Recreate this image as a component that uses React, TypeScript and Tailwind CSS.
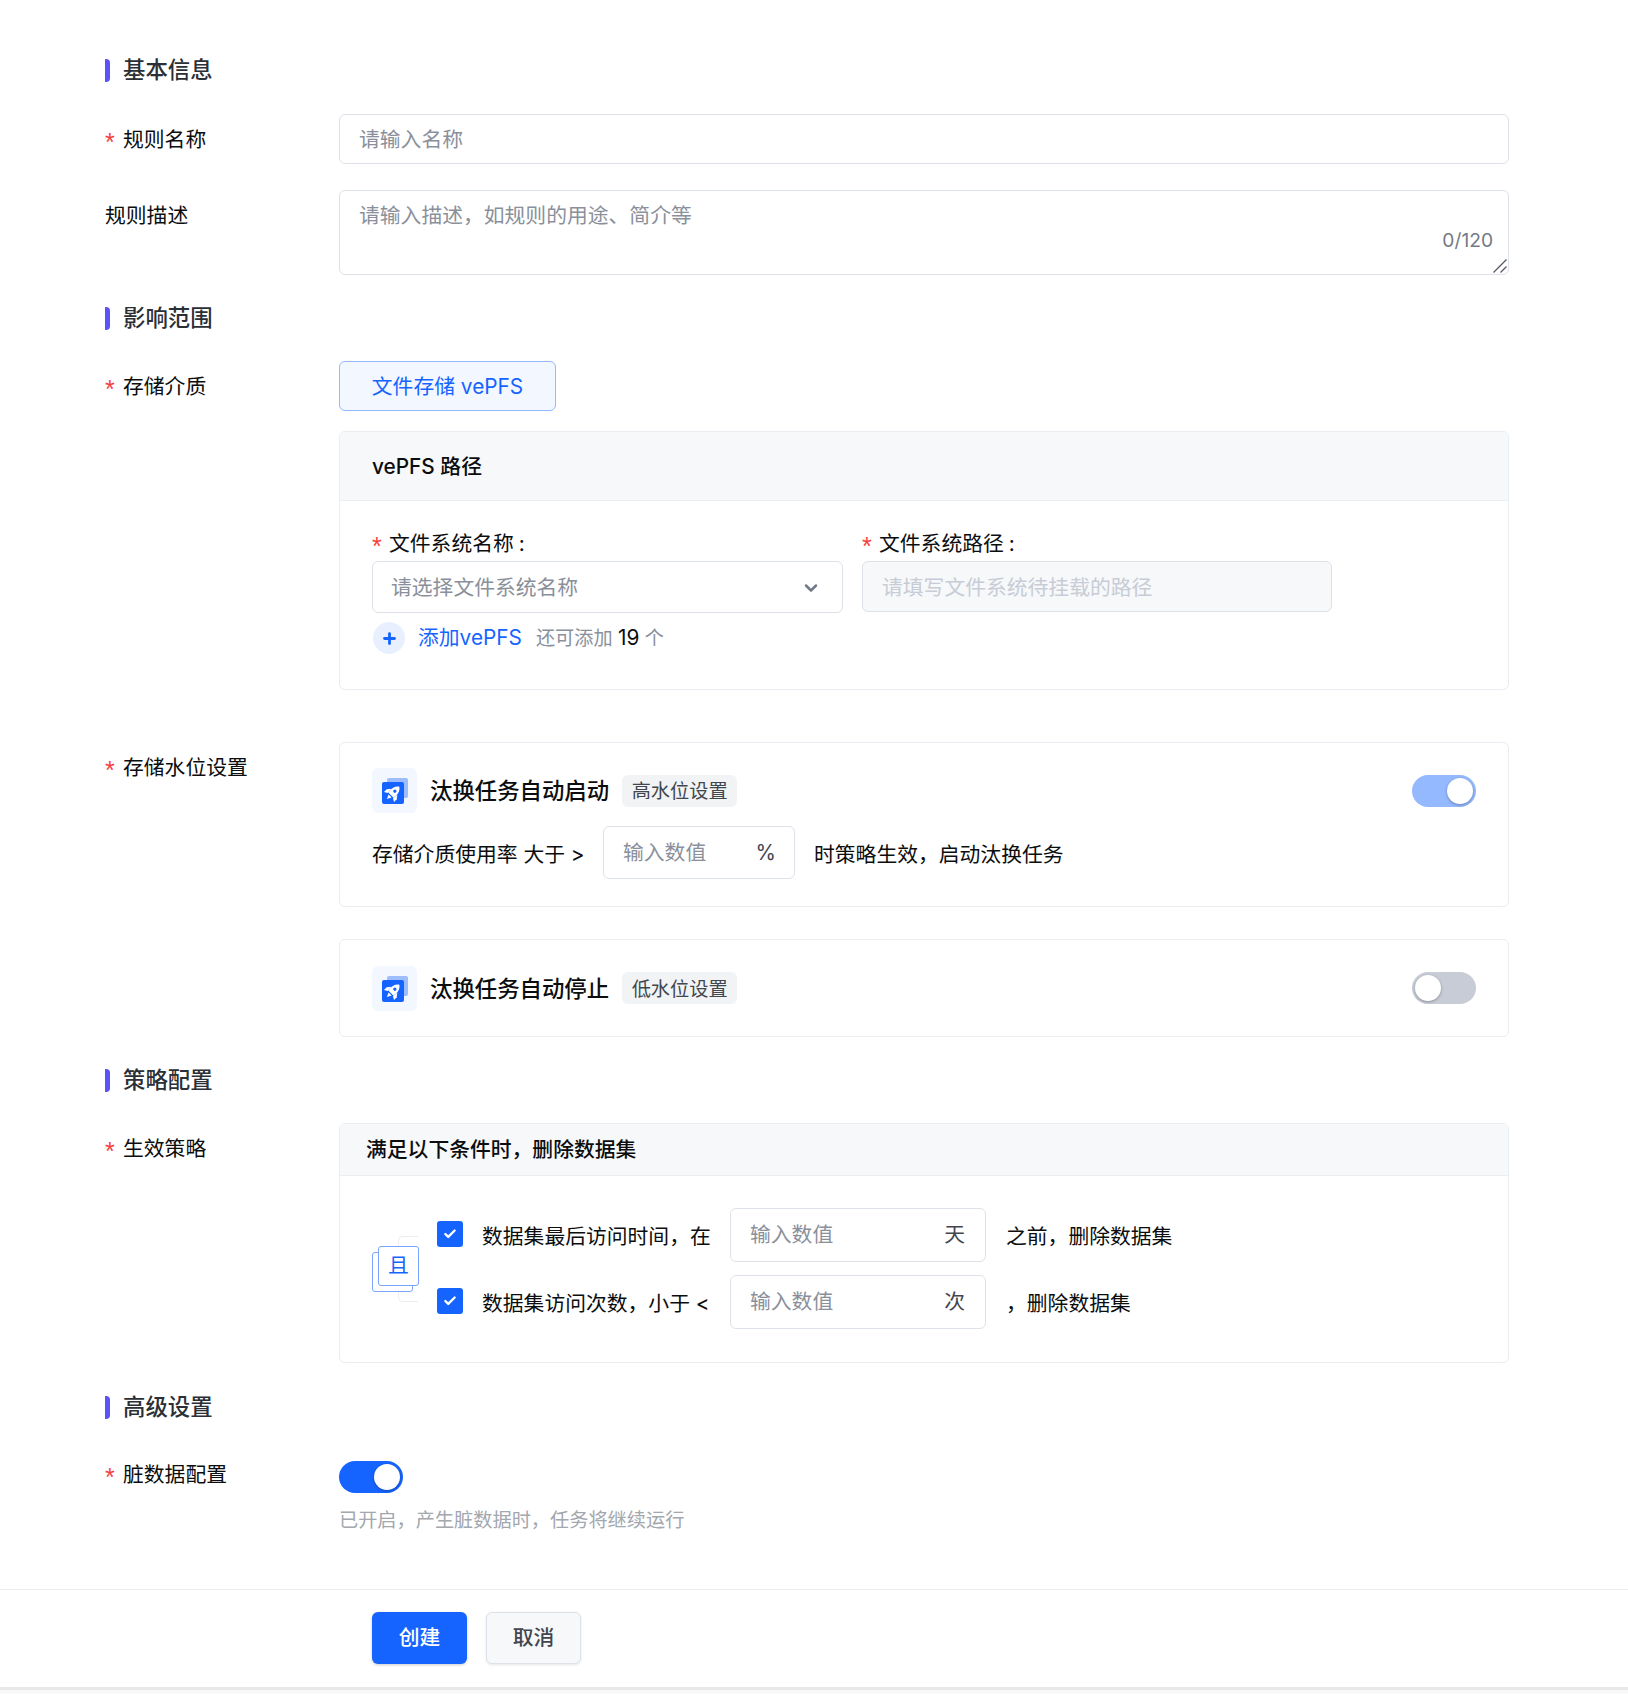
import { ReactNode } from 'react';
import { Check, ChevronDown, Plus } from 'lucide-react';

function Section({ title, className }: { title: string; className: string }) {
  return (
    <div className={`flex items-center h-[34px] ${className}`}>
      <span className="w-[5px] h-[23px] rounded-r-[4px] bg-[#5b52fb]" />
      <span className="ml-[13px] text-[22.4px] font-medium text-[#2b2f36]">{title}</span>
    </div>
  );
}

function Star({ className }: { className: string }) {
  return (
    <span className={`font-['Liberation_Sans',sans-serif] text-[25px] leading-none h-[20px] text-[#f53f3f] ${className}`}>*</span>
  );
}

function Row({ label, required, className, children }: { label: string; required?: boolean; className?: string; children: ReactNode }) {
  return (
    <div className={`flex ${className ?? ''}`}>
      <div className="w-[234px] shrink-0 h-[50px] pt-[2px] flex items-center text-[20.8px] text-[#0c0d0e]">
        {required && <Star className="w-[18px]" />}
        {label}
      </div>
      <div className="flex-1 min-w-0">{children}</div>
    </div>
  );
}

function Toggle({ on, light }: { on: boolean; light?: boolean }) {
  const track = !on ? 'bg-[#c7ccd6] justify-start' : light ? 'bg-[#94b9ff] justify-end' : 'bg-[#1664ff] justify-end';
  return (
    <div className={`w-[64px] h-[32px] rounded-full flex items-center px-[3px] ${track}`}>
      <span className="w-[26px] h-[26px] rounded-full bg-white shadow-[0_1px_3px_rgba(0,0,0,0.3)]" />
    </div>
  );
}

function TaskIcon() {
  return (
    <div className="relative w-[45px] h-[45px] rounded-[6px] bg-[#f3f7ff]">
      <span className="absolute left-[15px] top-[10px] w-[21px] h-[20px] rounded-[2px] bg-[#9dbdfd]" />
      <span className="absolute left-[10px] top-[14px] w-[22px] h-[22px] rounded-[2px] bg-[#1664ff] flex items-center justify-center">
        <svg viewBox="0 0 24 24" className="w-[18px] h-[18px]" fill="#fff">
          <g transform="rotate(45 12 12)">
            <path d="M12 0C16.6 3.4 18 8.4 17 16H7C6 8.4 7.4 3.4 12 0Z" />
            <path d="M6.4 9.5L2.5 14.5V19.5L7 17Z" />
            <path d="M17.6 9.5L21.5 14.5V19.5L17 17Z" />
            <path d="M9.2 17.5H14.8L12 23.5Z" />
            <circle cx="12" cy="8.5" r="2.2" fill="#1664ff" />
          </g>
        </svg>
      </span>
    </div>
  );
}

function Chip({ children }: { children: ReactNode }) {
  return (
    <span className="ml-[13px] h-[32px] w-[115px] pt-[2px] rounded-[6px] bg-[#f1f3f5] text-[19.2px] text-[#42464e] flex items-center justify-center">
      {children}
    </span>
  );
}

function UnitInput({ unit, className }: { unit: string; className: string }) {
  return (
    <div className={`flex items-center rounded-[6px] border border-[#dde2e9] pl-[19px] ${className}`}>
      <input placeholder="输入数值" className="flex-1 min-w-0 outline-none bg-transparent text-[20.8px] placeholder:text-[#8a909b]" />
      <span className="text-[20.8px] text-[#42464e]">{unit}</span>
    </div>
  );
}

function Condition({ text, unit, after, className }: { text: string; unit: string; after: string; className?: string }) {
  return (
    <div className={`flex items-center h-[54px] text-[20.8px] text-[#0c0d0e] ${className ?? ''}`}>
      <span className="w-[26px] h-[26px] rounded-[3px] bg-[#1664ff] flex items-center justify-center mb-[3px]">
        <Check className="text-white w-[14px] h-[14px]" strokeWidth={4} />
      </span>
      <span className="ml-[19px] w-[248px] pt-[4px] whitespace-nowrap">{text}</span>
      <UnitInput unit={unit} className="w-[256px] h-[54px] pr-[20px]" />
      <span className="ml-[20px] pt-[4px]">{after}</span>
    </div>
  );
}

export default function App() {
  return (
    <div className="min-h-[1694px] bg-white font-['Inter','Noto_Sans_CJK_SC',sans-serif] flex flex-col">
      <main className="pl-[105px] pr-[119px] pt-[53px]">
        <Section title="基本信息" className="mb-[27px]" />
        <Row label="规则名称" required className="mb-[26px]">
          <input
            placeholder="请输入名称"
            className="block w-full h-[50px] px-[19px] rounded-[6px] border border-[#dde2e9] outline-none text-[20.8px] placeholder:text-[#8a909b]"
          />
        </Row>
        <Row label="规则描述" className="mb-[26px]">
          <div className="relative h-[85px]">
            <textarea
              placeholder="请输入描述，如规则的用途、简介等"
              className="block w-full h-[85px] px-[19px] py-[9px] rounded-[6px] border border-[#dde2e9] outline-none resize-none text-[20.8px] placeholder:text-[#8a909b]"
            />
            <span className="absolute right-[16px] top-[36px] text-[19.2px] text-[#737a87]">0/120</span>
            <svg viewBox="0 0 14 14" className="absolute right-[2px] bottom-[2px] w-[14px] h-[14px]" stroke="#55585e" strokeWidth="1.2">
              <path d="M0.5 13.5L13.5 0.5" />
              <path d="M7.5 13.5L13.5 7.5" />
            </svg>
          </div>
        </Row>

        <Section title="影响范围" className="mb-[26px]" />
        <Row label="存储介质" required>
          <div className="w-[217px] h-[50px] pt-[2px] rounded-[6px] border border-[#94b9ff] bg-[#f3f7ff] text-[20.8px] text-[#1664ff] flex items-center justify-center">
            文件存储 vePFS
          </div>
          <div className="mt-[20px] h-[259px] rounded-[6px] border border-[#eaedf1]">
            <div className="h-[69px] pt-[2px] px-[32px] flex items-center bg-[#f6f8fa] border-b border-[#eaedf1] rounded-t-[6px] text-[20.8px] font-medium text-[#0c0d0e]">
              vePFS 路径
            </div>
            <div className="px-[32px] pt-[27px]">
              <div className="flex gap-[19px] text-[20.8px] text-[#0c0d0e]">
                <div className="w-[471px]">
                  <div className="h-[33px] pb-[2px] flex items-center">
                    <Star className="w-[17px]" />文件系统名称<span className="ml-[5px]">:</span>
                  </div>
                  <div className="h-[52px] pt-[1px] rounded-[6px] border border-[#dde2e9] pl-[18px] pr-[21px] flex items-center justify-between text-[#8a909b]">
                    请选择文件系统名称
                    <ChevronDown className="w-[20px] h-[20px] text-[#737a87]" strokeWidth={3} />
                  </div>
                </div>
                <div className="w-[470px]">
                  <div className="h-[33px] pb-[2px] flex items-center">
                    <Star className="w-[17px]" />文件系统路径<span className="ml-[5px]">:</span>
                  </div>
                  <input
                    disabled
                    placeholder="请填写文件系统待挂载的路径"
                    className="block w-full h-[51px] pt-[1px] rounded-[6px] border border-[#dde2e9] bg-[#f6f8fa] px-[19px] outline-none text-[20.8px] placeholder:text-[#c7ccd6]"
                  />
                </div>
              </div>
              <div className="mt-[9px] ml-[1px] flex items-center">
                <span className="w-[32px] h-[32px] rounded-full bg-[#e8f0ff] flex items-center justify-center">
                  <Plus className="w-[17px] h-[17px] text-[#1664ff]" strokeWidth={4} />
                </span>
                <span className="ml-[13px] text-[20.8px] text-[#1664ff]">添加vePFS</span>
                <span className="ml-[14px] text-[19.2px] text-[#8a909b]">
                  还可添加 <span className="text-[20.8px] text-[#0c0d0e]">19</span> 个
                </span>
              </div>
            </div>
          </div>
        </Row>

        <Row label="存储水位设置" required className="mt-[52px]">
          <div className="h-[165px] rounded-[6px] border border-[#eaedf1] px-[32px] pt-[25px]">
            <div className="flex items-center">
              <TaskIcon />
              <span className="ml-[13px] pt-[1px] text-[22.4px] font-medium text-[#0c0d0e]">汰换任务自动启动</span>
              <Chip>高水位设置</Chip>
              <div className="ml-auto">
                <Toggle on light />
              </div>
            </div>
            <div className="mt-[13px] flex items-center text-[20.8px] text-[#0c0d0e]">
              <span className="w-[231px] pt-[4px] whitespace-nowrap">存储介质使用率 大于 &gt;</span>
              <UnitInput unit="%" className="w-[192px] h-[53px] pr-[18px]" />
              <span className="ml-[19px] pt-[4px]">时策略生效，启动汰换任务</span>
            </div>
          </div>
          <div className="mt-[32px] h-[98px] rounded-[6px] border border-[#eaedf1] px-[32px] flex items-center">
            <TaskIcon />
            <span className="ml-[13px] pt-[1px] text-[22.4px] font-medium text-[#0c0d0e]">汰换任务自动停止</span>
            <Chip>低水位设置</Chip>
            <div className="ml-auto">
              <Toggle on={false} />
            </div>
          </div>
        </Row>

        <Section title="策略配置" className="mt-[26px] mb-[26px]" />
        <Row label="生效策略" required>
          <div className="h-[240px] rounded-[6px] border border-[#eaedf1]">
            <div className="h-[52px] px-[26px] flex items-center bg-[#f6f8fa] border-b border-[#eaedf1] rounded-t-[6px] text-[20.8px] font-medium text-[#0c0d0e]">
              满足以下条件时，删除数据集
            </div>
            <div className="flex pl-[32px] pt-[32px]">
              <div className="relative w-[65px] h-[122px] shrink-0">
                <span className="absolute left-[26px] top-[28px] w-[20px] h-[66px] rounded-l-[5px] border border-r-0 border-[#eaedf1]" />
                <span className="absolute left-0 top-[44px] w-[41px] h-[40px] rounded-[3px] border border-[#7aa5ff] bg-white" />
                <span className="absolute left-[6px] top-[38px] w-[41px] h-[40px] rounded-[3px] border border-[#7aa5ff] bg-white text-[#1664ff] text-[20.8px] flex items-center justify-center">
                  且
                </span>
              </div>
              <div>
                <Condition text="数据集最后访问时间，在" unit="天" after="之前，删除数据集" />
                <Condition text="数据集访问次数，小于 <" unit="次" after="，删除数据集" className="mt-[13px]" />
              </div>
            </div>
          </div>
        </Row>

        <Section title="高级设置" className="mt-[27px] mb-[25px]" />
        <Row label="脏数据配置" required>
          <div className="pt-[12px]">
            <Toggle on />
            <p className="mt-[13px] text-[19.2px] text-[#a3a7ae]">已开启，产生脏数据时，任务将继续运行</p>
          </div>
        </Row>
      </main>

      <footer className="mt-[54px] h-[98px] border-t border-[#eaedf1] pl-[372px] pt-[22px] flex gap-[19px]">
        <button className="w-[95px] h-[52px] rounded-[6px] bg-[#1664ff] text-white text-[20.8px] font-medium shadow-[0_1px_3px_rgba(0,0,0,0.2)]">
          创建
        </button>
        <button className="w-[95px] h-[52px] rounded-[6px] bg-[#f6f8fa] border border-[#dde2e9] text-[#42464e] text-[20.8px] font-medium shadow-[0_1px_3px_rgba(0,0,0,0.1)]">
          取消
        </button>
      </footer>
      <div className="flex-1 border-t-[3px] border-[#e8e8e8] bg-[#f8f8f8]" />
    </div>
  );
}
